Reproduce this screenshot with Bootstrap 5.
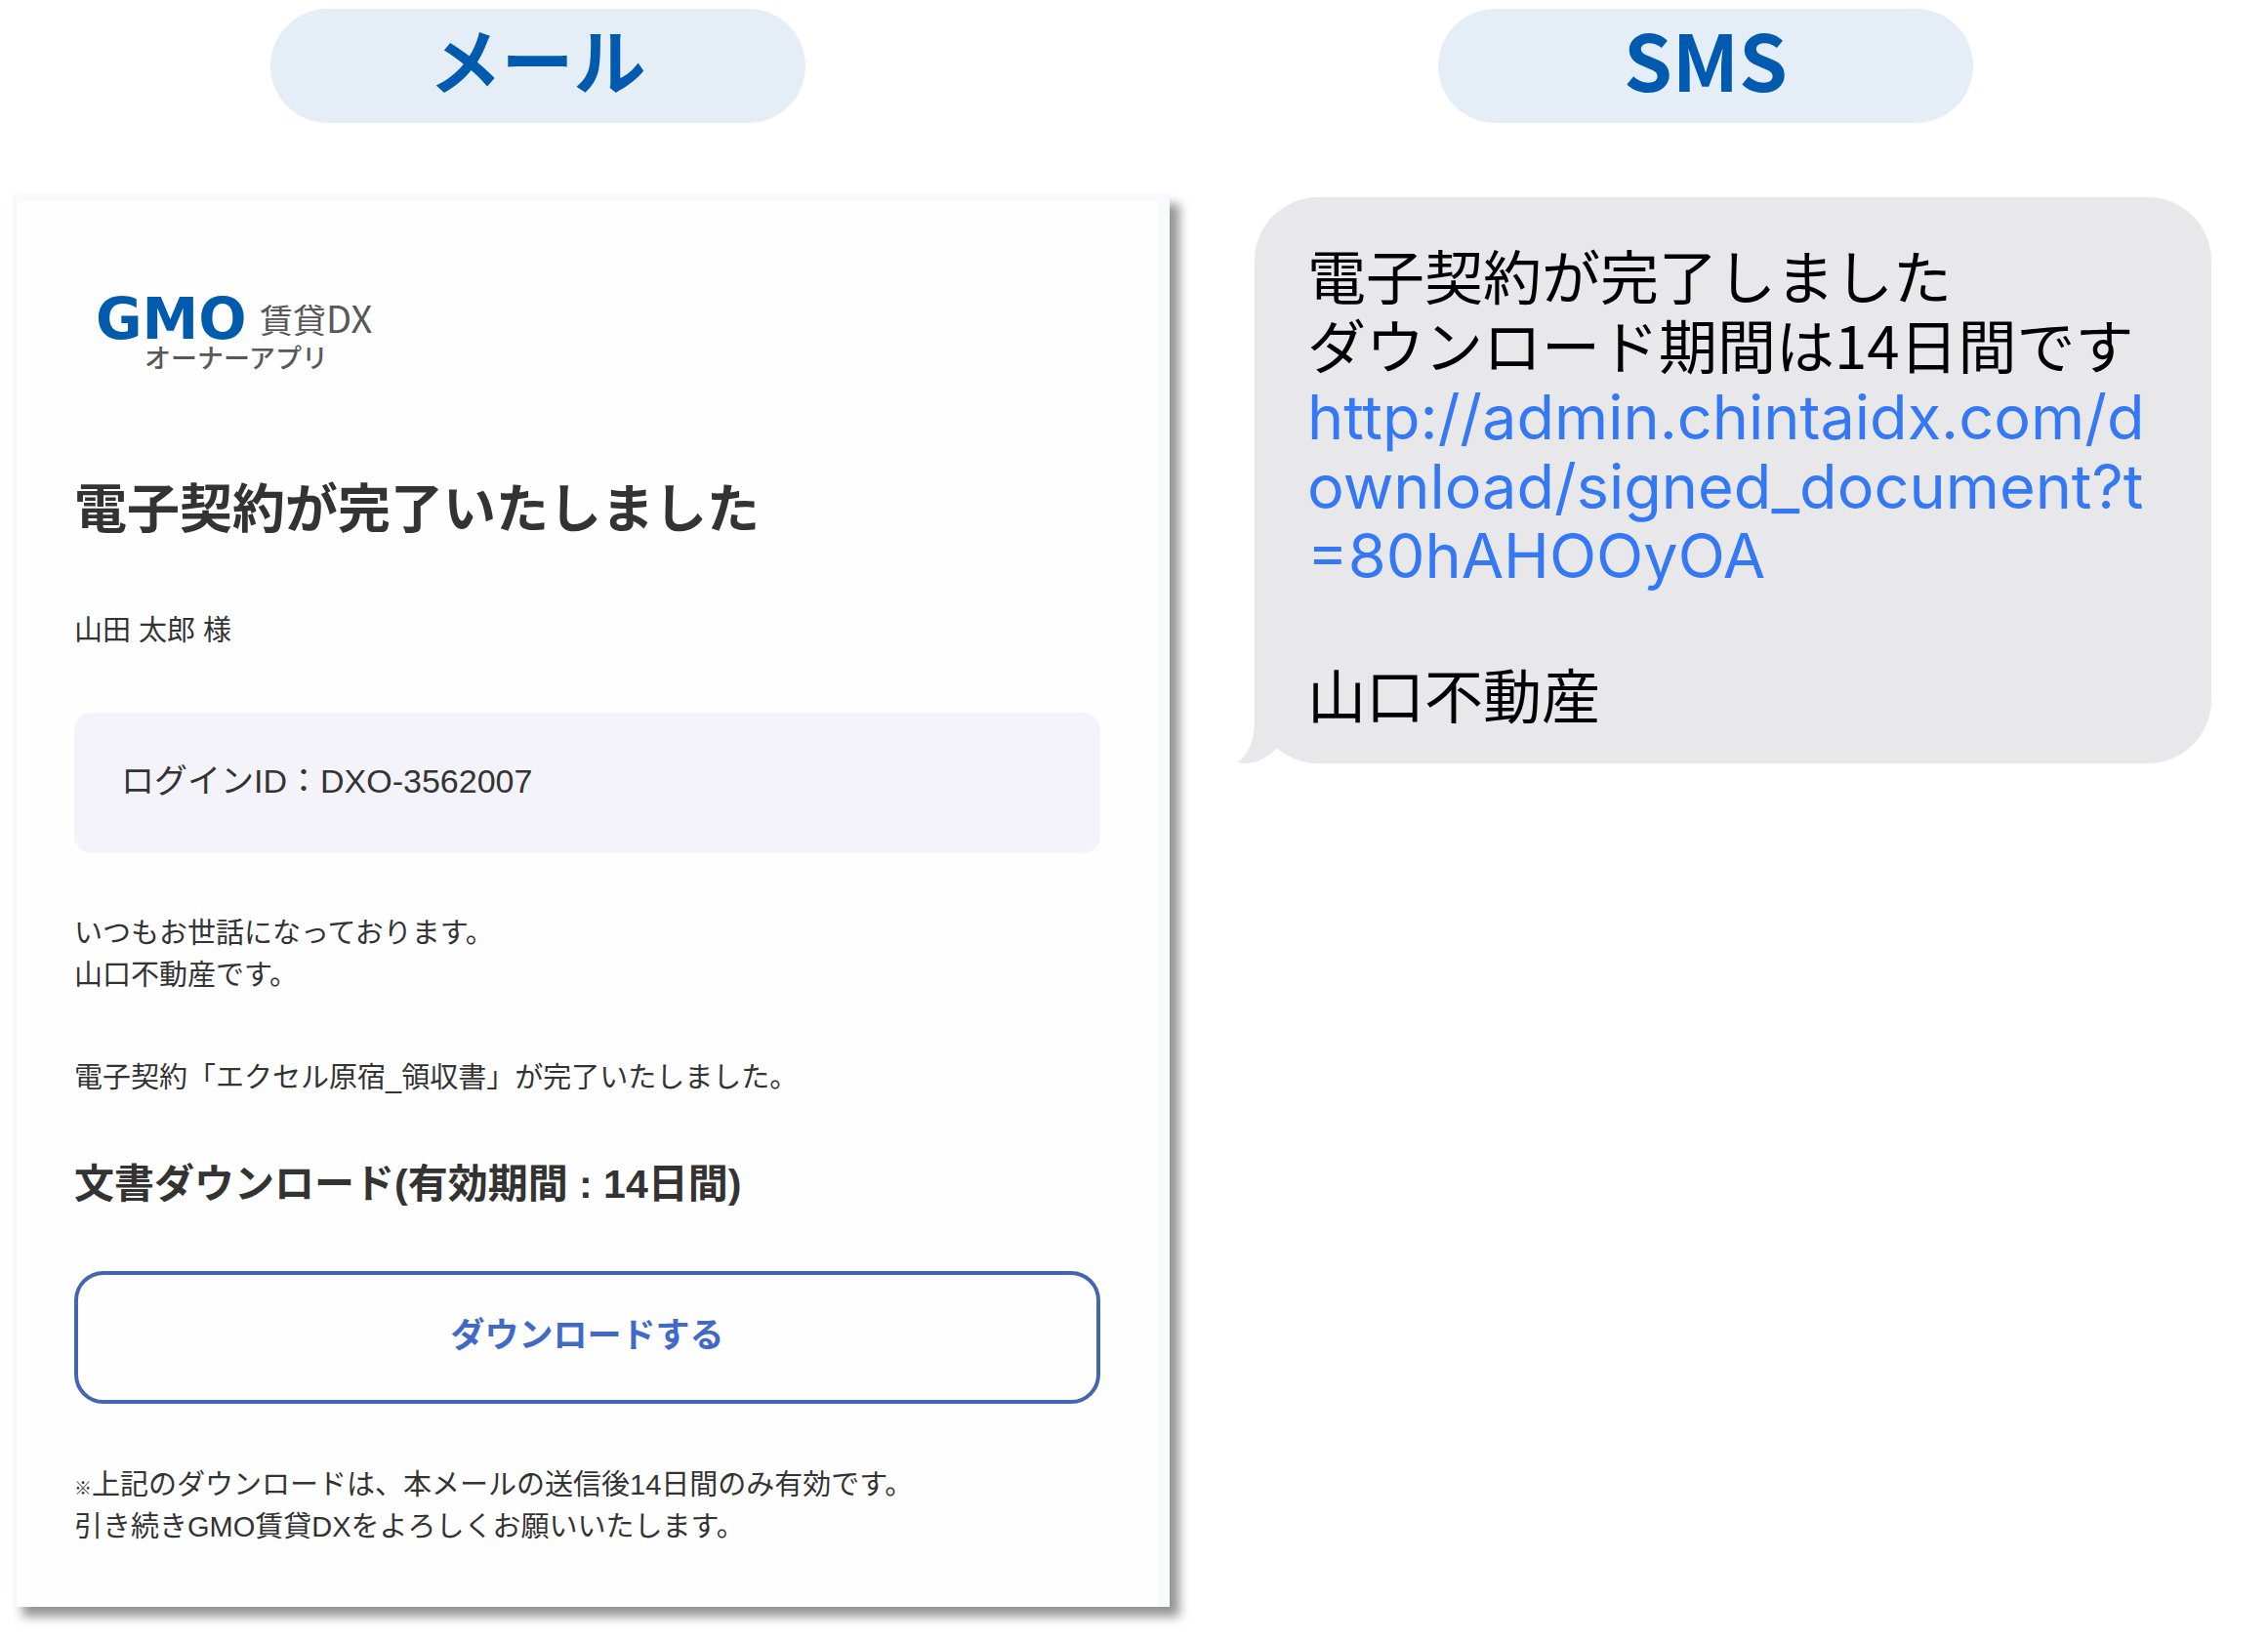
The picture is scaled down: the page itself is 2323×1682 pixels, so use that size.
<!DOCTYPE html>
<html lang="ja">
<head>
<meta charset="utf-8">
<meta name="viewport" content="width=device-width, initial-scale=1">
<title>電子契約完了通知</title>
<link rel="stylesheet" href="https://cdn.jsdelivr.net/npm/bootstrap@5.3.0/dist/css/bootstrap.min.css">
<style>
  body { font-family: "Liberation Sans", "Noto Sans CJK JP", sans-serif; color: #333; background: #fff; }
  .channels { display: grid; grid-template-columns: 1185fr 980fr; column-gap: 87px; padding: 9px 58px 32px 13px; }
  .pill-head { width: 548px; height: 117px; background: #e5edf6; color: #005bb0; font: 700 74px/100px "Noto Sans CJK JP", sans-serif; }
  .mail-head { padding-right: 110px; }
  .sms-head { padding-right: 56px; }
  .pill-sms { font-size: 80px; }

  .mail { margin-top: 73px; padding: 97px 59px 60px 58px; background: #fefefe; border: solid #f8f9fb; border-width: 8px 12px 0 5px; box-shadow: 10px 10px 10px rgba(0,0,0,.42); font-size: 29px; line-height: 43px; }
  .brand { width: 320px; margin-left: 22px; color: #595757; font-family: "Noto Sans CJK JP", sans-serif; }
  .brand-row { height: 46px; }
  .brand-gmo { width: 168px; color: #005bac; font: 700 58px/46px "DejaVu Sans", sans-serif; }
  .brand-name { font-size: 34px; line-height: 42px; padding-bottom: 2px; }
  .brand-dx { font-size: 38px; }
  .brand-sub { padding-left: 50px; font-size: 27px; font-weight: 500; line-height: 32px; }
  .mail h1 { margin: 100px 0 0; font-size: 54px; font-weight: 700; line-height: 80px; }
  .addressee { margin: 63px 0 0; }
  .login-id { margin-top: 62px; height: 144px; padding: 0 48px 4px; border-radius: 18px; background: #f4f3f9; font-size: 34px; }
  .greeting { margin: 61px 0 0; }
  .notice { margin: 62px 0 0; }
  .mail h2 { margin: 57px 0 0; font-size: 41px; font-weight: 700; line-height: 60px; }
  .btn-download { margin-top: 59px; height: 136px; border: 4px solid #4466b0; border-radius: 30px; color: #4169c8; font-size: 35px; font-weight: 700; padding-bottom: 10px; }
  .btn-download:hover { background: #4169c8; color: #fff; }
  .remarks { margin: 62px 0 0; }
  .ref-mark { font-size: 18px; font-weight: 700; line-height: 1; }

  .bubble { position: relative; margin-top: 76px; min-height: 580px; padding: 43px 54px 24px; border-radius: 65px; background: #e8e8ea; color: #000; font: 400 60px/71px "Noto Sans CJK JP", sans-serif; }
  .bubble p { margin: 0; }
  .bubble .sms-link { margin-top: 5px; }
  .bubble .sender { margin-top: 69px; }
  .bubble a { display: block; color: #3478f6; text-decoration: none; font-family: Inter, sans-serif; font-size: 63px; white-space: nowrap; }
  .tail { position: absolute; left: -20px; bottom: 0; }
</style>
<script src="https://cdn.jsdelivr.net/npm/bootstrap@5.3.0/dist/js/bootstrap.bundle.min.js"></script>
</head>
<body>
<main class="channels">
  <section>
    <div class="mail-head d-flex justify-content-center"><div class="pill-head rounded-pill text-center">メール</div></div>
    <article class="mail">
      <div class="brand">
        <div class="brand-row d-flex align-items-center">
          <span class="brand-gmo">GMO</span><span class="brand-name">賃貸<span class="brand-dx">DX</span></span>
        </div>
        <div class="brand-sub">オーナーアプリ</div>
      </div>
      <h1>電子契約が完了いたしました</h1>
      <p class="addressee">山田 太郎 様</p>
      <div class="login-id d-flex align-items-center">ログインID：DXO-3562007</div>
      <p class="greeting">いつもお世話になっております。<br>山口不動産です。</p>
      <p class="notice">電子契約「エクセル原宿_領収書」が完了いたしました。</p>
      <h2>文書ダウンロード(有効期間 : 14日間)</h2>
      <button type="button" class="btn btn-download w-100">ダウンロードする</button>
      <p class="remarks"><span class="ref-mark">※</span>上記のダウンロードは、本メールの送信後14日間のみ有効です。<br>引き続きGMO賃貸DXをよろしくお願いいたします。</p>
    </article>
  </section>
  <section>
    <div class="sms-head d-flex justify-content-center"><div class="pill-head pill-sms rounded-pill text-center">SMS</div></div>
    <article class="bubble">
      <p>電子契約が完了しました<br>ダウンロード期間は14日間です</p>
      <p class="sms-link"><a href="#">http://admin.chintaidx.com/d<br>ownload/signed_document?t<br>=80hAHOOyOA</a></p>
      <p class="sender">山口不動産</p>
      <svg class="tail" width="44" height="62" viewBox="0 0 44 62" aria-hidden="true"><path d="M20 0V18C20 38 14 54 2 61C18 64 32 58 43 46V0Z" fill="#e8e8ea"/></svg>
    </article>
  </section>
</main>
</body>
</html>
